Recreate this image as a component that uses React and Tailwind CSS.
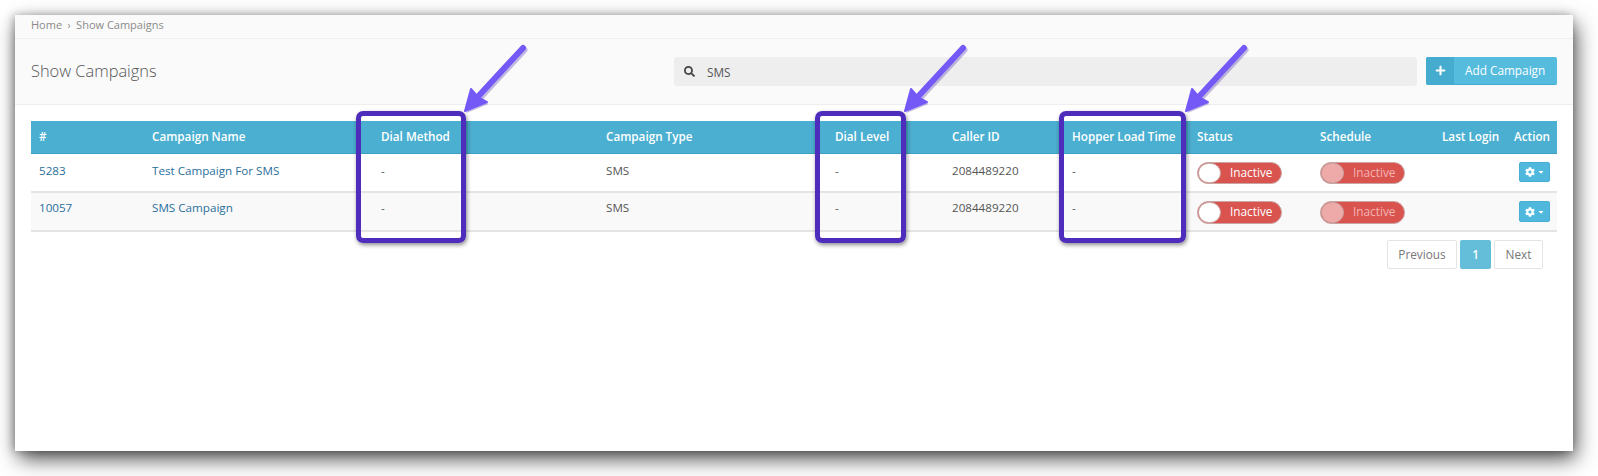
import React from "react";
import { FaCog, FaSearch, FaPlus, FaCaretDown } from "react-icons/fa";

const cols = [113, 229, 225, 229, 117, 120, 125, 122, 123, 72, 51];
const heads = ["#", "Campaign Name", "Dial Method", "Campaign Type", "Dial Level", "Caller ID", "Hopper Load Time", "Status", "Schedule", "Last Login", "Action"];
const rows = [
  { id: "5283", name: "Test Campaign For SMS" },
  { id: "10057", name: "SMS Campaign" },
];

function Toggle({ dim, odd }) {
  return (
    <div className={`flex w-[85px] items-center rounded-full bg-[#d9534f] border border-[#c9a5a3] ${odd ? "h-[23px]" : "h-[22px]"}`}>
      <span className={`h-full w-[23px] shrink-0 rounded-full border border-[#c9a5a3] ${dim ? "bg-[#eeaaa8]" : "bg-white"}`} />
      <span className={`ml-[9px] text-[11.8px] leading-none ${dim ? "text-[#f3b4b2]" : "text-white"}`}>Inactive</span>
    </div>
  );
}

function Row({ r, odd }) {
  const h = odd ? "h-[39px] bg-[#f9f9f9]" : "h-[39px] bg-white";
  const base = "border-b-2 border-[#e4e4e4] px-2";
  const txt = `${base} align-top text-[11.65px] leading-[17px] ${odd ? "pt-[6px]" : "pt-[8px]"}`;
  const ctl = `${base} align-middle pt-[1px]`;
  const plain = `${txt} text-[#555]`;
  const link = `${txt} text-[#2a6f9c]`;
  return (
    <tr className={h}>
      <td className={link}>{r.id}</td>
      <td className={link}>{r.name}</td>
      <td className={plain}>-</td>
      <td className={plain}>SMS</td>
      <td className={plain}>-</td>
      <td className={plain}>2084489220</td>
      <td className={plain}>-</td>
      <td className={ctl}><Toggle odd={odd} /></td>
      <td className={`${ctl} !pl-[9px]`}><Toggle dim odd={odd} /></td>
      <td className={ctl}></td>
      <td className={`${base} align-top pt-[8px] !pl-[13px] !pr-[7px]`}>
        <button className={`flex w-[31px] items-center justify-center gap-[2px] rounded-[2px] bg-[#4fb8dc] border border-[#46afd3] text-white ${odd ? "h-[21px]" : "h-[20px]"}`}>
          <FaCog className="text-[10px]" />
          <FaCaretDown className="text-[8px]" />
        </button>
      </td>
    </tr>
  );
}

function Arrow({ x, y }) {
  return (
    <svg className="absolute" style={{ left: x - 15, top: y - 15 - 66 }} width="76" height="76" viewBox="-6 -70 76 76" fill="none">
      <path d="M8 -9 L58 -63" stroke="#5b3fb0" strokeOpacity="0.35" strokeWidth="6" strokeLinecap="round" transform="translate(1.5 2)" />
      <path d="M0 0 L6 -22 L12 -15 L14 -14 L22 -9 Z" fill="#5b3fb0" fillOpacity="0.35" transform="translate(1.5 2)" />
      <path d="M8 -9 L58 -63" stroke="#7559f7" strokeWidth="6" strokeLinecap="round" />
      <path d="M0 0 L6 -22 L13 -14 L22 -9 Z" fill="#7559f7" stroke="#7559f7" strokeWidth="2" strokeLinejoin="round" />
    </svg>
  );
}

function Box({ className }) {
  return <div className={`absolute top-[96px] h-[132px] rounded-[7px] border-[5px] border-[#4e2cbc] shadow-[1px_2px_4px_rgba(0,0,0,0.45)] ${className}`} />;
}

export default function App() {
  return (
    <div className="h-[476px] w-[1598px] overflow-hidden bg-white pl-[15px] pt-[15px]" style={{ fontFamily: '"Open Sans", sans-serif' }}>
      <div className="relative h-[436px] w-[1558px] bg-white shadow-[3px_8px_20px_-1px_rgba(0,0,0,0.75),-2px_0_8px_rgba(0,0,0,0.25)]">
        <div className="flex h-[24px] items-center border-b border-[#eeeeee] bg-[#fafafa] pb-[2px] pl-4 text-[11px] text-[#8a8a8a]">
          <span>Home</span>
          <span className="mx-[5.5px] text-[10px]">›</span>
          <span>Show Campaigns</span>
        </div>
        <div className="flex h-[66px] items-center border-b border-[#eeeeee] bg-[#fafafa] pl-4 pr-4">
          <h1 className="w-[643px] pb-[1px] text-[16.4px] font-light text-[#555]">Show Campaigns</h1>
          <div className="flex h-[29px] w-[743px] items-center rounded-[3px] bg-[#eeeeee] pl-[10px] text-[11.8px] text-[#555]">
            <FaSearch className="text-[11px] text-[#444]" />
            <span className="ml-[12px] pt-[3px]">SMS</span>
          </div>
          <button className="mb-[1px] ml-[9px] flex h-[28px] w-[131px] items-center rounded-[2px] border-b border-[#3eaed4] bg-[#55bcde] text-[11.8px] text-white">
            <span className="flex h-full w-[28px] items-center justify-center rounded-l-[2px] bg-[#45acd0]"><FaPlus className="text-[11px]" /></span>
            <span className="ml-[11px]">Add Campaign</span>
          </button>
        </div>
        <div className="px-4 pt-[16px]">
          <table className="w-[1526px] table-fixed border-collapse">
            <colgroup>
              {cols.map((w, i) => <col key={i} style={{ width: w }} />)}
            </colgroup>
            <thead>
              <tr className="h-[32px] border-b border-[#3f9fc2] bg-[#4bafd1]">
                {heads.map((t, i) => (
                  <th key={t} className={`whitespace-nowrap px-2 text-left text-[11.7px] font-semibold text-white ${i === 8 ? "!pl-[9px]" : ""}`}>{t}</th>
                ))}
              </tr>
            </thead>
            <tbody>
              {rows.map((r, i) => <Row key={r.id} r={r} odd={i === 1} />)}
            </tbody>
          </table>
          <div className="mt-[8px] flex justify-end gap-[3px] pr-[14px] text-[11.8px]">
            <span className="flex h-[29px] w-[70px] items-center justify-center rounded-[2px] border border-[#e4e4e4] text-[#777]">Previous</span>
            <span className="flex h-[29px] w-[31px] items-center justify-center rounded-[2px] bg-[#64bdd9] font-semibold text-white">1</span>
            <span className="flex h-[29px] w-[49px] items-center justify-center rounded-[2px] border border-[#e4e4e4] text-[#777]">Next</span>
          </div>
        </div>
        <Box className="left-[341px] w-[110px]" />
        <Box className="left-[800px] w-[91px]" />
        <Box className="left-[1044px] w-[127px]" />
        <Arrow x={459} y={107} />
        <Arrow x={899} y={107} />
        <Arrow x={1180} y={107} />
      </div>
    </div>
  );
}
